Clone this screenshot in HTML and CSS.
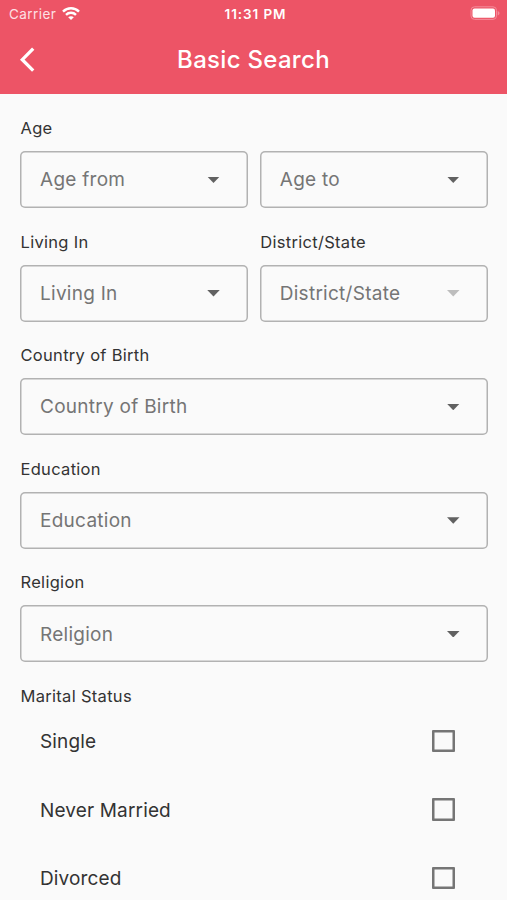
FILE: index.html
```html
<!DOCTYPE html>
<html lang="en">
<head>
<meta charset="utf-8">
<title>Basic Search</title>
<link rel="stylesheet" href="styles.css">
</head>
<body>
<div class="screen">
  <header class="header">
    <div class="status">
      <div class="status-left">
        <span class="carrier">Carrier</span>
        <svg class="wifi" width="18" height="14" viewBox="0 0 18 14" fill="none" stroke="#fff" stroke-width="2.4"><path d="M1 4.6C5.5.1 12.5.1 17 4.6"/><path d="M4 7.8C6.8 5 11.2 5 14 7.8"/><path d="M9 13.1 6.2 10.3C7.7 8.8 10.3 8.8 11.8 10.3Z" fill="#fff" stroke="none"/></svg>
      </div>
      <span class="clock">11:31 PM</span>
      <svg class="battery" width="31" height="15" viewBox="0 0 31 15"><rect x="1" y="0.8" width="25.5" height="12.6" rx="3.5" fill="none" stroke="#f48b9a" stroke-width="1"/><rect x="2.5" y="2.4" width="22.5" height="9.4" rx="2" fill="#fff"/><path d="M27.7 5C30.1 5.8 30.1 8.6 27.7 9.4Z" fill="#f48b9a"/></svg>
    </div>
    <div class="navbar">
      <svg class="back" width="16" height="26" viewBox="0 0 16 26" fill="none" stroke="#fff" stroke-width="3.3"><path d="M14.2 1.7 3.3 12.7 14.2 23.7"/></svg>
      <h1 class="title">Basic Search</h1>
    </div>
  </header>
  <main class="form">
    <div class="row">
      <div class="field"><div class="label">Age</div><div class="select"><span>Age from</span><i class="caret"></i></div></div>
      <div class="field"><div class="label"></div><div class="select"><span>Age to</span><i class="caret"></i></div></div>
    </div>
    <div class="row">
      <div class="field"><div class="label">Living In</div><div class="select"><span>Living In</span><i class="caret"></i></div></div>
      <div class="field"><div class="label">District/State</div><div class="select"><span>District/State</span><i class="caret disabled"></i></div></div>
    </div>
    <div class="row"><div class="field"><div class="label">Country of Birth</div><div class="select"><span>Country of Birth</span><i class="caret"></i></div></div></div>
    <div class="row"><div class="field"><div class="label">Education</div><div class="select"><span>Education</span><i class="caret"></i></div></div></div>
    <div class="row"><div class="field"><div class="label">Religion</div><div class="select"><span>Religion</span><i class="caret"></i></div></div></div>
    <div class="label last">Marital Status</div>
    <div class="option"><span>Single</span><i class="box"></i></div>
    <div class="option"><span>Never Married</span><i class="box"></i></div>
    <div class="option"><span>Divorced</span><i class="box"></i></div>
  </main>
</div>
</body>
</html>
```
FILE: styles.css
```css
* { box-sizing: border-box; }
body { margin: 0; background: #fafafa; font-family: Inter, "Liberation Sans", sans-serif; }
.screen { height: 900px; overflow: hidden; }
.header { height: 94px; background: #ed5466; color: #fff; }
.status { display: grid; grid-template-columns: 1fr auto 1fr; align-items: center; height: 27px; padding: 0 6px 0 9px; }
.status-left { display: flex; align-items: center; gap: 6px; }
.carrier { color: #fde0e4; font-size: 13.5px; letter-spacing: 0.45px; }
.clock { font-weight: 600; font-size: 13.5px; letter-spacing: 0.9px; margin-top: 1px; margin-right: -1px; }
.battery { justify-self: end; }
.navbar { display: grid; grid-template-columns: 60px 1fr 60px; align-items: center; height: 65px; }
.back { margin-left: 19px; }
.title { margin: 0; text-align: center; font-size: 24px; font-weight: 500; letter-spacing: 0.3px; }
.form { padding: 23px 19.5px 0 20px; }
.row { display: flex; gap: 12px; height: 113.6px; }
.field { flex: 1; }
.label { height: 23px; line-height: 23px; padding-left: 0.5px; margin-bottom: 11px; font-size: 16.5px; letter-spacing: 0.3px; color: #333; white-space: nowrap; }
.label.last { height: 22px; margin: 0; }
.select { display: flex; align-items: center; justify-content: space-between; height: 57px; padding: 0.5px 28px 0 20px; box-shadow: inset 0 0 0 1.5px #b2b2b2; border-radius: 5px; font-size: 19px; letter-spacing: 0.27px; color: #757575; white-space: nowrap; }
.caret { width: 12.5px; height: 6.5px; background: #616161; clip-path: polygon(0 0, 100% 0, 50% 100%); }
.caret.disabled { background: #bdbdbd; }
.option { display: flex; align-items: center; justify-content: space-between; height: 68.4px; padding: 0 33px 0 20px; font-size: 19px; letter-spacing: 0.15px; color: #333; }
.option span { padding-top: 1px; }
.box { width: 22.5px; height: 22.5px; box-shadow: inset 0 0 0 2.5px #757575; border-radius: 1px; }
```
